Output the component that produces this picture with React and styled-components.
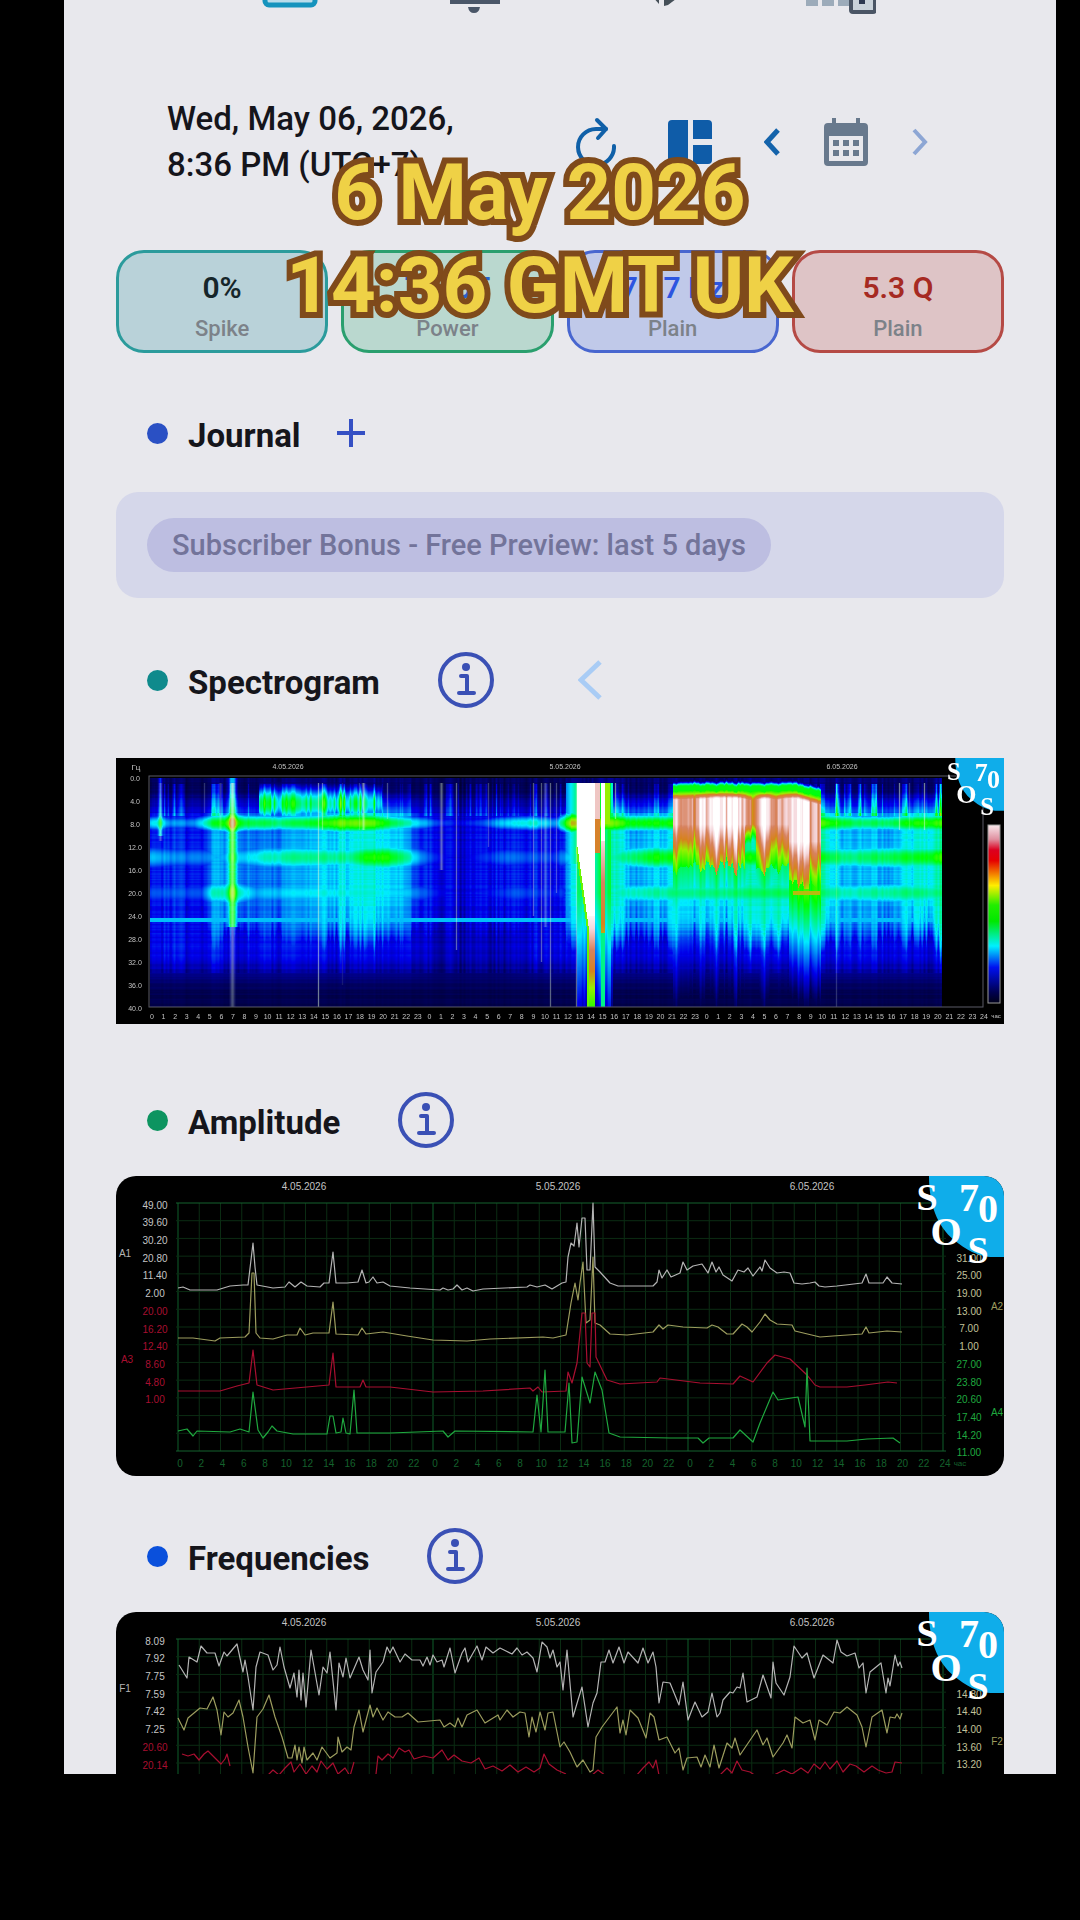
import { useEffect, useRef } from "react";
import styled, { createGlobalStyle } from "styled-components";

const GlobalStyle = createGlobalStyle`
  *, *::before, *::after {
    box-sizing: border-box;
  }

  body {
    margin: 0;
    background: #000;
    color: #15151b;
    font-family: Roboto, "Liberation Sans", sans-serif;
  }

  button {
    font: inherit;
    color: inherit;
    border: 0;
    padding: 0;
    background: none;
    cursor: pointer;
  }

  svg {
    display: block;
  }
`;

const Page = styled.div`
  position: relative;
  height: 100vh;
  padding: 0 24px 146px 64px;
`;

const Screen = styled.main`
  height: 100%;
  overflow: hidden;
  background: #e8e8ed;
  padding: 0 52px;
`;

const Caption = styled.p`
  position: absolute;
  top: 146px;
  left: 0;
  right: 0;
  margin: 0;
  text-align: center;
  font-size: 78px;
  line-height: 93px;
  font-weight: 700;
  color: #efd146;
  -webkit-text-stroke: 12px #7f4a1b;
  paint-order: stroke fill;
  stroke-linejoin: round;
  pointer-events: none;
`;

const TabBar = styled.nav`
  display: flex;
  justify-content: space-between;
  align-items: flex-end;
  height: 14px;
  overflow: hidden;
  padding: 0 128px 0 146px;
`;

const TopRow = styled.header`
  display: flex;
  justify-content: space-between;
  align-items: center;
  margin-top: 82px;
  padding: 0 76px 0 51px;
`;

const Stamp = styled.time`
  font-size: 33px;
  line-height: 46px;
  font-weight: 500;
`;

const Actions = styled.div`
  display: flex;
  align-items: center;
  gap: 44px;
`;

const IconButton = styled.button`
  margin: 0 ${(props) => props.$space || 0}px;
`;

const Stats = styled.div`
  display: grid;
  grid-template-columns: repeat(4, 1fr);
  gap: 13px;
  margin-top: 62px;
`;

const Stat = styled.div`
  display: flex;
  flex-direction: column;
  align-items: center;
  gap: 6px;
  padding: 15px 0 6px;
  border: 3px solid ${(props) => props.$line};
  border-radius: 28px;
  background: ${(props) => props.$fill};
`;

const StatValue = styled.strong`
  font-size: 30px;
  line-height: 40px;
  font-weight: 600;
  color: ${(props) => props.$color};
`;

const StatLabel = styled.span`
  font-size: 22px;
  line-height: 30px;
  font-weight: 500;
  color: #7c8289;
`;

const Section = styled.section`
  margin-top: 52px;
`;

const Heading = styled.div`
  display: flex;
  align-items: center;
  height: 56px;
  padding-left: 31px;
`;

const Dot = styled.span`
  width: 21px;
  height: 21px;
  border-radius: 50%;
  background: ${(props) => props.$color};
`;

const Title = styled.h2`
  margin: 6px ${(props) => props.$gap || 58}px 0 20px;
  font-size: 33px;
  line-height: 40px;
  font-weight: 700;
`;

const Back = styled.button`
  margin-left: 84px;
`;

const Banner = styled.div`
  margin: 31px 0 54px;
  padding: 26px 31px;
  border-radius: 22px;
  background: #d5d7ea;
`;

const Pill = styled.span`
  display: inline-block;
  padding: 0 25px;
  border-radius: 28px;
  background: #bdbee1;
  color: #73749a;
  font-size: 29px;
  line-height: 54px;
  font-weight: 500;
  vertical-align: top;
`;

const Plot = styled.div`
  display: grid;
  margin: 28px 0 0;
  border-radius: 20px;
  overflow: hidden;
  background: #000;

  > * {
    grid-area: 1 / 1;
    width: 100%;
    height: auto;
  }
`;

const SpectrumPlot = styled(Plot)`
  margin: 50px 0 68px;
  border-radius: 0;
`;

const PlotText = styled.text`
  font-family: "Liberation Sans", Arial, sans-serif;
  font-size: ${(props) => props.$size || 10}px;
  text-anchor: middle;
  dominant-baseline: central;
  fill: ${(props) => props.$color || "#c4c4c4"};
`;

const LogoText = styled.text`
  font-family: "Liberation Serif", "Times New Roman", serif;
  font-size: ${(props) => props.$size}px;
  font-weight: 700;
  text-anchor: middle;
  fill: #fff;
`;

/* ---------- spectrogram ---------- */

const RAMP = [
  [0, 0, 0, 40],
  [0.08, 0, 0, 110],
  [0.18, 0, 0, 235],
  [0.34, 0, 235, 255],
  [0.51, 0, 255, 0],
  [0.64, 150, 240, 0],
  [0.72, 215, 130, 30],
  [0.82, 215, 130, 95],
  [0.92, 245, 215, 220],
  [1, 255, 255, 255],
];

// strength along the time axis at 7.8, 14 and 20 Hz
const BAND_1 = [[34, .34], [44, .36], [52, .28], [78, .28], [95, .46], [116, .56], [130, .48], [165, .44], [200, .5], [222, .6], [255, .6], [275, .48], [300, .35], [318, .24], [340, .18], [365, .22], [385, .32], [415, .38], [440, .28], [448, .5], [455, .68], [500, .6], [512, .52], [556, .52], [706, .58], [722, .5], [745, .44], [775, .46], [800, .54], [826, .55]];
const BAND_2 = [[34, .32], [60, .27], [100, .28], [150, .38], [180, .42], [235, .42], [250, .52], [270, .54], [290, .42], [310, .24], [340, .14], [365, .2], [390, .26], [440, .22], [455, .35], [500, .4], [540, .52], [556, .5], [700, .52], [730, .42], [800, .5], [826, .54]];
const BAND_3 = [[34, .24], [85, .24], [95, .36], [118, .42], [140, .3], [200, .35], [255, .37], [290, .32], [312, .22], [340, .15], [370, .19], [400, .24], [440, .2], [500, .38], [556, .42], [700, .46], [730, .38], [800, .44], [826, .42]];
const FLOOR = [[34, .16], [85, .16], [100, .24], [130, .23], [150, .21], [200, .27], [230, .3], [255, .32], [285, .28], [305, .16], [340, .12], [400, .16], [445, .14], [455, .3], [500, .34], [515, .26], [556, .3], [706, .36], [725, .26], [775, .26], [800, .33], [826, .34]];
const DEEP = [[34, .15], [290, .15], [320, .1], [380, .1], [420, .14], [826, .15]];
// pale lines: [x, width, opacity, lowest frequency reached]
const STREAKS = [[44, 2, .3, 11], [88, 1, .2, 6], [104, 2, .2, 9], [116, 3, .7, 40], [202, 1, .5, 40], [206, 1, .4, 9], [226, 1, .1, 36], [243, 1, .2, 9], [247, 2, .5, 9], [271, 1, .3, 7], [325, 2, .4, 16], [340, 1, .4, 30], [372, 1, .25, 12], [417, 1, .35, 24], [425, 1, .35, 32], [429, 2, .3, 26], [434, 1, .4, 40], [440, 1, .3, 20], [460, 1, .4, 40], [499, 1, .5, 7], [720, 1, .2, 40], [783, 1, .5, 9], [793, 1, .2, 9], [808, 1, .5, 9]];

const at = (curve, x) => {
  const i = curve.findIndex(([cx]) => cx >= x);
  if (i === -1) return curve[curve.length - 1][1];
  if (i === 0) return curve[0][1];
  const [x0, v0] = curve[i - 1];
  const [x1, v1] = curve[i];
  return v0 + ((v1 - v0) * (x - x0)) / (x1 - x0);
};

const bump = (d, width) => Math.exp(-(d * d) / (2 * width * width));

const hash = (n) => {
  const s = Math.sin(n * 127.1 + 11.7) * 43758.5453;
  return s - Math.floor(s);
};

const grain = (x, step) => {
  const i = Math.floor(x / step);
  const t = x / step - i;
  return hash(i) * (1 - t) + hash(i + 1) * t - 0.5;
};

const rampColor = (v) => {
  const c = Math.max(0, Math.min(1, v));
  const i = Math.max(1, RAMP.findIndex(([stop]) => stop >= c));
  const a = RAMP[i - 1];
  const b = RAMP[i];
  const t = (c - a[0]) / (b[0] - a[0]);
  return [1, 2, 3].map((k) => a[k] + (b[k] - a[k]) * t);
};

const storm = (x, f, n) => {
  if (x < 557 || x > 704) return 0;
  const seam = bump(x - 635, 4) * 0.2 + bump(x - 660, 3) * 0.12;
  const core = 0.82 + bump(x - 607, 19) * 0.22 + bump(x - 650, 6) * 0.1 + bump(x - 680, 12) * 0.18 - seam + n * 0.28;
  const reach = x > 672 ? 15 : 12;
  const low = 1.4 + (x > 680 ? (x - 680) / 25 : 0) + n * 0.4;
  const tail = x > 672 ? 0.53 - Math.max(0, f - 20) * 0.026 : 0.46 - Math.max(0, f - 15) * 0.018;
  if (f < low) return 0.5 * bump(f - low, 0.5);
  if (f < low + 0.7) return 0.5;
  if (f < low + 2.2) return 0.5 + ((core - 0.5) * (f - low - 0.7)) / 1.5;
  const fade = Math.max(0, f - (reach - 4)) * 0.045;
  const notch = x > 628 && x < 640 ? Math.max(0, f - 8) * 0.08 : 0;
  const body = f > reach + 3.5 + n * 3 ? 0 : core - fade - notch;
  return Math.max(body, tail - seam * 0.5 + n * 0.12);
};

const burst = (x, f, n) => {
  if (x < 450 || x > 496 || f < 0.8) return 0;
  const left = f < 12 ? 461 : Math.min(473, 461 + (f - 12) * 0.8);
  let v = 0.44 - Math.max(0, f - 20) * 0.014 + n * 0.12;
  if (x < 461) v = f < 15 ? 0.44 - (461 - x) * 0.015 : 0.28 - Math.max(0, f - 24) * 0.02;
  if (x > 494) v -= 0.1;
  if (x >= left - 2 && x < left && f > 12) v = 0.6;
  if (x >= left && x <= 478) v = f < 24 ? 1 : 0.98 - (f - 24) * 0.027;
  if (x > 478 && x < 484) v = f < 7 ? 0.9 : f < 13 ? 0.74 : v;
  if (x >= 485 && x < 489) v = f < 11 ? 1 : f < 27 ? 0.92 - (f - 11) * 0.014 : 0.42;
  if (x >= 489 && x < 494) v = f < 8 ? 0.64 : v;
  return v;
};

const intensity = (x, f) => {
  const n = grain(x, 2) * 0.7 + grain(x + 900, 5) * 0.6;
  const rows = grain(f * 40 + 5000, 9);
  const cutoff = 1 / (1 + Math.exp((f - 29 - n * 4) / 1.9));
  const top = f < 6 ? Math.max(0.15, f / 6 - 0.2) : 1;
  const deep = at(DEEP, x) / (1 + Math.exp((f - 34) / 1.3));
  let v = Math.max(at(FLOOR, x) * cutoff * top, f > 7 ? deep : 0) + 0.04 + n * 0.07 * (f < 34 ? 1 : 0.2) + rows * 0.03;
  const width = 0.8 + at(BAND_1, x);
  v = Math.max(v, at(BAND_1, x) * bump(f - 7.8, width) + n * 0.05);
  v = Math.max(v, at(BAND_2, x) * bump(f - 13.8, 1.9) + n * 0.05);
  v = Math.max(v, at(BAND_3, x) * bump(f - 20, 1.9) + n * 0.05);
  if (x > 142 && x < 266) v = Math.max(v, (0.42 + n * 0.22) * bump(f - 4.4, 2) * (x > 245 ? 0.85 : 1));
  if (f > 1 && f < 6.5) v += Math.max(0, n) * (x > 700 ? 0.4 : 0.22);
  if (f < 26) v += 0.25 * bump(x - 116, 3);
  if (f < 10) v += 0.15 * bump(x - 44, 1.5);
  v = Math.max(v, storm(x, f, n), burst(x, f, n));
  if (Math.abs(f - 24.7) < 0.3) v = Math.max(v, 0.31);
  if (x > 676 && x < 704 && Math.abs(f - 20) < 0.4) v = 0.68;
  return v;
};

const pale = (x, f) =>
  STREAKS.reduce((sum, [sx, w, opacity, end]) => {
    if (Math.abs(x - sx) > w || f > end || f < 0.8) return sum;
    return Math.max(sum, opacity * bump(x - sx, w * 0.5) * (w > 2 ? 1 - f / 70 : 1));
  }, 0);

const PLOT = { left: 34, right: 826, top: 20, bottom: 249 };

const SpectrumCanvas = () => {
  const ref = useRef(null);

  useEffect(() => {
    const ctx = ref.current.getContext("2d");
    const w = PLOT.right - PLOT.left;
    const h = PLOT.bottom - PLOT.top;
    const image = ctx.createImageData(w, h);
    for (let x = 0; x < w; x++) {
      for (let y = 0; y < h; y++) {
        const f = (y / h) * 40;
        const mix = pale(x + PLOT.left, f);
        const [r, g, b] = rampColor(intensity(x + PLOT.left, f));
        image.data.set([r + (225 - r) * mix, g + (250 - g) * mix, b + (215 - b) * mix, 255], (y * w + x) * 4);
      }
    }
    ctx.putImageData(image, PLOT.left, PLOT.top);
  }, []);

  return <canvas ref={ref} width="888" height="266" />;
};

const Logo = ({ scale = 1 }) => (
  <g transform={`translate(888 0) scale(${scale}) translate(-888 0)`}>
    <path d="M813 0C813 28 821 50 838 64C850 74 862 80 874 81H888V0Z" fill="#0fadea" />
    <LogoText $size={38} x="811" y="34">S</LogoText>
    <LogoText $size={40} x="830" y="69">O</LogoText>
    <LogoText $size={38} x="862" y="87">S</LogoText>
    <LogoText $size={40} x="853" y="35">7</LogoText>
    <LogoText $size={40} x="872" y="46">0</LogoText>
  </g>
);

const Spectrum = () => (
  <SpectrumPlot>
    <SpectrumCanvas />
    <svg viewBox="0 0 888 266" role="img" aria-label="Spectrogram, 4 to 6 May 2026">
      <defs>
        <linearGradient id="scale" x1="0" y1="0" x2="0" y2="1">
          <stop offset="0" stopColor="#f8e8ec" />
          <stop offset="0.08" stopColor="#e090a0" />
          <stop offset="0.14" stopColor="#dc0020" />
          <stop offset="0.2" stopColor="#e60000" />
          <stop offset="0.34" stopColor="#ffee00" />
          <stop offset="0.45" stopColor="#22ee00" />
          <stop offset="0.54" stopColor="#00e800" />
          <stop offset="0.68" stopColor="#00f0ff" />
          <stop offset="0.8" stopColor="#0010f0" />
          <stop offset="0.94" stopColor="#000050" />
          <stop offset="1" stopColor="#000018" />
        </linearGradient>
      </defs>
      <rect x="33" y="18" width="834" height="231" fill="none" stroke="#5a5a66" />
      <rect x="872" y="67" width="12" height="178" fill="url(#scale)" stroke="#999" />
      <PlotText $size={8} x="20" y="9">Гц</PlotText>
      {["0.0", "4.0", "8.0", "12.0", "16.0", "20.0", "24.0", "28.0", "32.0", "36.0", "40.0"].map((label, i) => (
        <PlotText key={label} $size={7} x="19" y={20 + i * 23}>{label}</PlotText>
      ))}
      {["4.05.2026", "5.05.2026", "6.05.2026"].map((label, i) => (
        <PlotText key={label} $size={7} x={172 + i * 277} y="8">{label}</PlotText>
      ))}
      {Array.from({ length: 73 }, (_, i) => (
        <PlotText key={i} $size={7} x={36 + (i * 832) / 72} y="258">{i === 72 ? 24 : i % 24}</PlotText>
      ))}
      <PlotText $size={6} x="880" y="258">час</PlotText>
      <Logo scale={0.65} />
    </svg>
  </SpectrumPlot>
);

/* ---------- line charts ---------- */

const WHITE = "#b4b4b4";
const OLIVE = "#9c9c5e";
const RED = "#a80f30";
const GREEN = "#1fa83f";

const AMPLITUDE = {
  hours: true,
  names: [["A1", 9, 77, WHITE], ["A3", 11, 183, RED], ["A2", 881, 130, OLIVE], ["A4", 881, 236, GREEN]],
  left: [["49.00", "39.60", "30.20", "20.80", "11.40", "2.00"], ["20.00", "16.20", "12.40", "8.60", "4.80", "1.00"]],
  right: [["31.00", "25.00", "19.00", "13.00", "7.00", "1.00"], ["27.00", "23.80", "20.60", "17.40", "14.20", "11.00"]],
  traces: [
    [WHITE, "62,112 67,111 74,114 101,114 114,110 127,109 132,109 135,84 137,67 139,91 141,109 157,112 169,111 173,106 179,111 185,106 191,110 204,111 208,107 213,107 217,76 220,107 231,107 242,106 246,94 250,107 253,106 257,101 261,107 267,106 274,110 294,112 324,114 327,112 332,114 337,113 341,109 346,114 351,112 357,115 367,113 411,111 414,109 421,111 429,109 436,113 446,107 450,106 452,81 455,67 458,70 461,47 463,71 466,42 469,42 471,94 474,94 477,27 479,91 484,96 494,107 502,110 537,110 541,106 543,94 546,102 551,94 555,101 564,97 567,86 571,94 577,90 586,88 592,97 596,86 600,96 603,91 607,99 616,105 622,94 628,96 632,92 637,100 644,91 646,95 649,84 654,92 661,97 668,96 674,97 678,107 686,108 694,107 699,106 703,110 709,111 721,110 746,107 750,98 753,107 767,107 771,101 776,107 786,108"],
    [OLIVE, "62,162 77,162 99,165 104,162 129,161 133,157 136,97 138,97 140,157 144,162 157,163 171,159 181,159 184,152 189,159 197,157 213,157 217,126 220,158 242,159 246,152 250,158 267,156 291,160 317,164 351,165 374,163 427,161 437,162 450,159 455,127 459,107 462,124 464,107 467,86 470,147 474,144 477,81 479,147 484,149 494,158 511,159 537,156 543,149 547,153 552,149 567,151 591,152 596,149 602,151 611,158 617,158 626,148 631,151 636,156 644,146 649,138 654,144 661,148 676,149 679,155 704,161 717,160 746,158 750,151 753,157 771,155 786,156"],
    [RED, "62,215 104,215 121,210 133,207 137,174 141,209 157,214 213,209 217,177 220,211 244,211 247,204 250,211 274,211 317,216 367,215 414,212 417,215 422,211 426,216 450,215 452,196 456,207 461,187 466,137 469,137 471,187 474,191 476,137 479,137 480,181 491,204 504,208 541,206 544,202 584,207 617,208 624,200 637,206 651,187 659,179 674,183 691,199 699,209 704,211 731,211 749,209 772,206 781,207"],
    [GREEN, "62,255 71,253 77,260 81,255 114,256 124,253 133,256 137,216 142,254 147,262 152,256 156,250 161,255 177,258 211,258 214,240 217,240 220,257 225,256 227,242 230,257 234,258 238,214 241,257 274,257 327,255 332,261 339,255 417,256 421,219 425,256 429,194 432,256 449,256 453,207 456,267 461,266 466,201 474,227 479,196 486,214 493,257 504,261 554,262 582,262 587,267 593,262 617,262 624,254 637,266 644,247 657,216 662,224 682,221 689,251 691,192 694,265 731,265 751,263 777,262 784,267"],
  ],
};

const FREQUENCIES = {
  hours: false,
  names: [["F1", 9, 76, WHITE], ["F2", 881, 129, OLIVE]],
  left: [["8.09", "7.92", "7.75", "7.59", "7.42", "7.25"], ["20.60", "20.14"]],
  right: [["14.80", "14.40", "14.00", "13.60", "13.20"], []],
  traces: [
    [WHITE, "63,53 71,66 73,45 81,50 85,34 91,41 99,41 103,54 108,40 111,44 121,32 127,60 129,48 132,65 137,98 140,55 144,40 152,43 157,58 161,53 164,35 168,55 174,76 178,61 181,85 183,58 185,88 187,61 190,95 195,38 203,83 207,55 211,61 214,40 220,98 223,51 227,65 230,46 234,66 243,45 247,58 252,68 254,38 256,81 260,60 267,50 271,35 274,41 277,35 284,50 289,42 296,48 304,48 307,54 311,45 314,53 317,43 321,50 326,48 328,55 334,36 339,61 346,41 349,36 352,50 361,34 366,48 370,35 377,41 384,36 390,39 396,42 401,36 406,43 411,40 417,46 421,60 426,30 431,35 434,46 437,38 441,55 444,50 447,78 451,38 457,105 462,88 466,75 472,115 477,91 481,81 485,50 489,50 493,38 497,51 503,35 508,51 512,40 522,51 527,36 532,51 537,40 540,55 543,91 547,70 554,71 563,93 567,70 572,108 579,90 586,105 592,100 596,81 601,105 604,101 607,88 614,80 617,81 621,75 624,76 627,61 631,90 641,85 647,63 655,86 657,50 660,71 668,83 674,65 678,34 686,46 691,41 698,66 707,43 717,51 721,28 725,40 731,44 739,41 743,56 747,51 750,81 754,60 765,51 770,81 772,66 774,74 779,43 782,54 784,50 786,56"],
    [OLIVE, "62,106 68,118 72,106 84,96 91,97 97,85 101,98 105,123 108,100 112,105 117,101 123,88 127,105 132,135 137,161 141,105 147,97 153,83 159,105 166,125 172,146 176,146 179,133 181,148 183,135 186,151 188,135 191,148 197,141 201,148 206,135 214,146 221,141 222,125 226,140 231,135 235,138 238,115 243,98 247,120 254,93 257,105 261,96 267,108 272,100 279,105 286,105 292,101 302,110 324,108 328,115 334,111 339,115 342,106 346,115 351,103 361,98 369,111 382,103 384,108 391,98 397,105 404,100 409,101 413,125 416,105 420,120 424,100 429,118 432,101 437,100 444,135 448,130 454,140 461,155 467,148 474,160 477,158 480,125 486,115 501,95 504,121 507,108 510,123 514,98 522,106 530,126 534,101 538,105 543,128 551,125 559,141 563,136 567,158 571,146 581,145 585,155 589,143 594,155 598,133 603,156 611,131 616,136 619,126 624,143 641,118 647,133 651,126 657,145 667,131 671,123 676,136 679,105 687,111 694,108 699,128 703,108 711,113 718,100 724,101 731,95 741,103 746,115 750,135 756,105 766,98 771,121 774,105 779,106 781,102 784,107 786,101"],
    [RED, "66,142 72,144 78,142 83,148 88,142 92,139 97,144 101,148 105,152 109,147 111,142 114,154"],
    [RED, "151,164 157,158 163,163 169,156 175,150 178,160 184,152 190,162 196,154 201,160 205,149 211,157 217,151 222,162 229,156 234,164 238,150"],
    [RED, "260,162 262,144 266,148 272,142 277,146 283,136 289,140 293,138 298,147 308,144 317,146 326,138 332,148 338,143 346,149 355,151 363,146 369,157 377,154 386,159 394,153 402,160 410,155 418,160 424,156 428,142 433,152 441,158 450,162"],
    [RED, "475,164 482,158 490,164 520,164 527,156 533,150 537,156 540,148 543,163"],
    [RED, "604,163 611,156 616,161 621,149 626,158 634,160 640,164 656,164 668,158 676,162 685,156 692,161 698,152 704,157 709,150 714,157 721,149 727,160 734,152 740,154 748,160 756,154 762,158 770,161 776,160 779,150 786,151"],
  ],
};

const LineChart = ({ data, label }) => (
  <Plot>
    <svg viewBox="0 0 888 300" role="img" aria-label={label}>
      <g stroke="#0b2c13" strokeWidth="1">
        {Array.from({ length: 37 }, (_, i) => {
          const x = 62 + (i * 765) / 36;
          return <line key={i} x1={x} x2={x} y1="27" y2="275" stroke={i % 12 === 0 ? "#0f5f2a" : undefined} />;
        })}
        {Array.from({ length: 15 }, (_, i) => {
          const y = 27 + (i * 248) / 14;
          return <line key={i} x1="60" x2="830" y1={y} y2={y} stroke={i % 14 === 0 ? "#14622e" : undefined} />;
        })}
      </g>
      {["4.05.2026", "5.05.2026", "6.05.2026"].map((day, i) => (
        <PlotText key={day} x={188 + i * 254} y="10">{day}</PlotText>
      ))}
      {data.left.map((group, g) =>
        group.map((value, i) => (
          <PlotText key={`${g}-${i}`} $color={g ? RED : undefined} x="39" y={29 + ((g * 6 + i) * 248) / 14}>{value}</PlotText>
        ))
      )}
      {data.right.map((group, g) =>
        group.map((value, i) => (
          <PlotText key={`${g}-${i}`} $color={g ? GREEN : "#c2c29a"} x="853" y={82 + ((g * 6 + i) * 248) / 14}>{value}</PlotText>
        ))
      )}
      {data.names.map(([name, x, y, color]) => (
        <PlotText key={name} $color={color} x={x} y={y}>{name}</PlotText>
      ))}
      {data.hours &&
        Array.from({ length: 37 }, (_, i) => (
          <PlotText key={i} $color="#14602c" x={64 + (i * 765) / 36} y="287">{i === 36 ? 24 : (i * 2) % 24}</PlotText>
        ))}
      {data.hours && <PlotText $size={8} $color="#14602c" x="844" y="287">час</PlotText>}
      {data.traces.map(([color, points], i) => (
        <polyline key={i} points={points} fill="none" stroke={color} strokeWidth="1.2" strokeLinejoin="round" />
      ))}
      <Logo />
    </svg>
  </Plot>
);

/* ---------- icons ---------- */

const InfoIcon = () => (
  <svg width="56" height="56" viewBox="0 0 56 56" fill="none" stroke="#3a50b5" strokeWidth="4">
    <circle cx="28" cy="28" r="26" />
    <circle cx="28" cy="15" r="4" fill="#3a50b5" stroke="none" />
    <path d="M23 24H29V41M21 41H36" strokeLinecap="round" strokeLinejoin="round" />
  </svg>
);

const Chevron = ({ width, height, color, stroke, flip }) => (
  <svg width={width} height={height} viewBox={`0 0 ${width} ${height}`} fill="none" stroke={color} strokeWidth={stroke}>
    {flip ? (
      <path d={`M2 2L${width - 3} ${height / 2}L2 ${height - 2}`} />
    ) : (
      <path d={`M${width - 2} 2L3 ${height / 2}L${width - 2} ${height - 2}`} />
    )}
  </svg>
);

const RefreshIcon = () => (
  <svg width="40" height="50" viewBox="2 0 40 50" fill="none" stroke="#1060a8" strokeWidth="4" strokeLinecap="round" strokeLinejoin="round">
    <path d="M40 29A18 18 0 1 1 22 12L32 12" />
    <path d="M23 3L32 12L24 21" />
  </svg>
);

const LayoutIcon = () => (
  <svg width="44" height="44" viewBox="0 0 44 44" fill="#0f5ca8">
    <path d="M4 0H20V44H4Q0 44 0 40V4Q0 0 4 0Z" />
    <path d="M25 0H40Q44 0 44 4V19H25Z" />
    <path d="M25 25H44V40Q44 44 40 44H25Z" />
  </svg>
);

const CalendarIcon = () => (
  <svg width="44" height="48" viewBox="0 0 44 48" fill="#68798d">
    <path d="M8 0H12V6H8ZM32 0H36V6H32Z" />
    <path fillRule="evenodd" d="M4 5H40Q44 5 44 9V44Q44 48 40 48H4Q0 48 0 44V9Q0 5 4 5ZM5 18V43H39V18Z" />
    {[25, 35].map((y) => [12, 22, 32].map((x) => <rect key={`${x}-${y}`} x={x - 3} y={y - 3} width="6" height="6" />))}
  </svg>
);

const PlusIcon = () => (
  <svg width="28" height="28" viewBox="0 0 28 28" stroke="#3550c4" strokeWidth="4">
    <path d="M14 0V28M0 14H28" />
  </svg>
);

const ChartTabIcon = () => (
  <svg width="56" height="56" viewBox="0 0 56 56">
    <rect x="3" y="2" width="50" height="45" rx="4" fill="#b9dcea" stroke="#1593bd" strokeWidth="5" />
  </svg>
);

const BellTabIcon = () => (
  <svg width="64" height="56" viewBox="0 0 64 56" fill="#4a5668">
    <path d="M10 46V42L16 35V20Q18 5 32 3Q46 5 48 20V35L60 42V46H6Z" />
    <path d="M28 49H40Q39 55 34 55Q29 55 28 49Z" />
  </svg>
);

const PulseTabIcon = () => (
  <svg width="56" height="56" viewBox="0 0 56 56" fill="#454f58">
    <path d="M10 20L33 46V20ZM38 20V48L42 47L54 38V20Z" />
  </svg>
);

const PremiumTabIcon = () => (
  <svg width="72" height="56" viewBox="0 0 72 56">
    <path d="M2 36H14V48H2ZM18 24H30V48H18ZM34 12H46V48H34ZM50 2H62V30H50Z" fill="#9cabba" />
    <rect x="47" y="32" width="24" height="22" rx="2" fill="#c9d2da" stroke="#4a5565" strokeWidth="4" />
    <path d="M55 38H61V46H55Z" fill="#2c3850" />
  </svg>
);

const stats = [
  { value: "0%", label: "Spike", line: "#2b9b9c", fill: "#b9d2d9", color: "#16262a" },
  { value: "7.5 pT", label: "Power", line: "#2a9f6e", fill: "#bad8cf", color: "#2860cc" },
  { value: "7.87 Hz", label: "Plain", line: "#4866cf", fill: "#c0c9e9", color: "#2d55e0" },
  { value: "5.3 Q", label: "Plain", line: "#b54a45", fill: "#dec4c6", color: "#a62a22" },
];

const ChartHeading = ({ color, children, back }) => (
  <Heading>
    <Dot $color={color} />
    <Title>{children}</Title>
    <IconButton aria-label={`About ${children}`}>
      <InfoIcon />
    </IconButton>
    {back && (
      <Back aria-label="Previous">
        <Chevron width={24} height={40} color="#a9ccf5" stroke={5} />
      </Back>
    )}
  </Heading>
);

const App = () => (
  <Page>
    <GlobalStyle />
    <Screen>
      <TabBar>
        <IconButton aria-label="Charts"><ChartTabIcon /></IconButton>
        <IconButton aria-label="Alerts"><BellTabIcon /></IconButton>
        <IconButton aria-label="Pulse"><PulseTabIcon /></IconButton>
        <IconButton aria-label="Premium"><PremiumTabIcon /></IconButton>
      </TabBar>

      <TopRow>
        <Stamp dateTime="2026-05-06T20:36+07:00">
          Wed, May 06, 2026,
          <br />
          8:36 PM (UTC+7)
        </Stamp>
        <Actions>
          <IconButton aria-label="Refresh"><RefreshIcon /></IconButton>
          <IconButton aria-label="Layout" $space={8}><LayoutIcon /></IconButton>
          <IconButton aria-label="Previous day">
            <Chevron width={16} height={28} color="#1463ab" stroke={5} />
          </IconButton>
          <IconButton aria-label="Pick a date"><CalendarIcon /></IconButton>
          <IconButton aria-label="Next day">
            <Chevron width={16} height={28} color="#8da6d4" stroke={4} flip />
          </IconButton>
        </Actions>
      </TopRow>

      <Stats>
        {stats.map((stat) => (
          <Stat key={stat.value} $line={stat.line} $fill={stat.fill}>
            <StatValue $color={stat.color}>{stat.value}</StatValue>
            <StatLabel>{stat.label}</StatLabel>
          </Stat>
        ))}
      </Stats>

      <Section>
        <Heading>
          <Dot $color="#2a50c4" />
          <Title $gap={36}>Journal</Title>
          <IconButton aria-label="Add entry"><PlusIcon /></IconButton>
        </Heading>
        <Banner>
          <Pill>Subscriber Bonus - Free Preview: last 5 days</Pill>
        </Banner>
      </Section>

      <Section>
        <ChartHeading color="#0f8a8c" back>Spectrogram</ChartHeading>
        <Spectrum />
      </Section>

      <Section>
        <ChartHeading color="#0d9460">Amplitude</ChartHeading>
        <LineChart data={AMPLITUDE} label="Amplitude, 4 to 6 May 2026" />
      </Section>

      <Section>
        <ChartHeading color="#0a50dc">Frequencies</ChartHeading>
        <LineChart data={FREQUENCIES} label="Frequencies, 4 to 6 May 2026" />
      </Section>
    </Screen>

    <Caption>
      6 May 2026
      <br />
      14:36 GMT UK
    </Caption>
  </Page>
);

export default App;
